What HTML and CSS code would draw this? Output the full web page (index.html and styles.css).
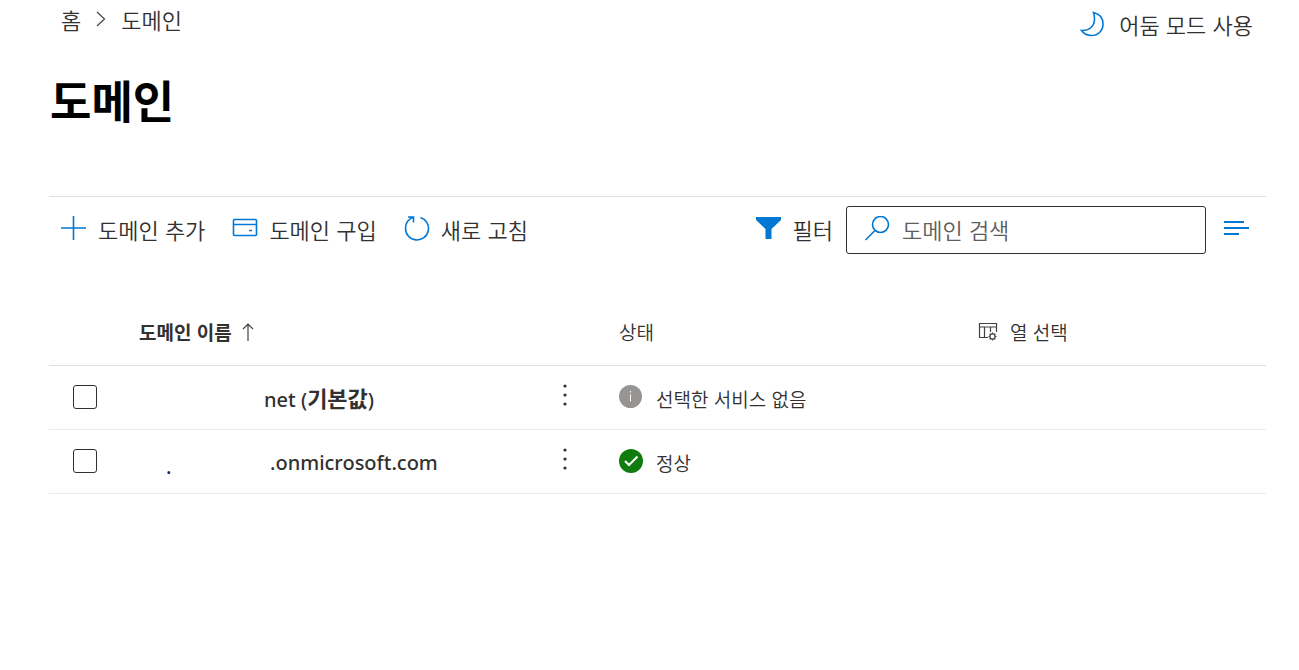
FILE: index.html
```html
<!DOCTYPE html>
<html lang="ko">
<head>
<meta charset="utf-8">
<title>도메인</title>
<meta name="viewport" content="width=device-width, initial-scale=1">
<link rel="stylesheet" href="styles.css">
</head>
<body>
<header class="topbar">
  <nav class="breadcrumb" aria-label="이동 경로">
    <a href="#">홈</a>
    <svg class="chevron" width="10" height="16" viewBox="0 0 10 16"><path d="M1 1l7.500 7L1 15"/></svg>
    <a href="#" aria-current="page">도메인</a>
  </nav>
  <button class="command dark-mode" type="button">
    <svg class="icon" width="26" height="26" viewBox="0 0 26 26"><path d="M13.500 1.500C20 3 23 7.500 23 13c0 6.500-4.800 11.500-11.500 11.500-4.500 0-8-2-10-5C9 20 14.500 15.500 14.500 8c0-2.300-.300-4.500-1-6.500z"/></svg>
    <span>어둠 모드 사용</span>
  </button>
</header>
<main class="page">
  <h1>도메인</h1>
  <div class="toolbar">
    <button class="command" type="button">
      <svg class="icon" width="26" height="26" viewBox="0 0 26 26"><path d="M12.500 0v24M0 12h25"/></svg>
      <span>도메인 추가</span>
    </button>
    <button class="command" type="button">
      <svg class="icon" width="26" height="26" viewBox="0 0 26 26"><rect x="1.500" y="3.500" width="23" height="16" rx="1"/><path d="M1.500 8.500h23M17 14.500h3"/></svg>
      <span>도메인 구입</span>
    </button>
    <button class="command" type="button">
      <svg class="icon" width="26" height="26" viewBox="0 0 26 26"><path d="M4 1h5.500v5.500M9.500 1C4.500 3 1.500 7.500 1.500 12.500A11.500 11.500 0 1 0 16.500 1.500"/></svg>
      <span>새로 고침</span>
    </button>
    <button class="command filter" type="button">
      <svg class="icon" width="26" height="26" viewBox="0 0 26 26"><path class="solid" d="M0 1h25v3l-9.500 9v10h-6V13L0 4z"/></svg>
      <span>필터</span>
    </button>
    <label class="search">
      <svg class="icon" width="26" height="26" viewBox="0 0 26 26"><circle cx="16.500" cy="8.500" r="8"/><path d="M11 14.500l-9.500 9.500"/></svg>
      <input type="search" placeholder="도메인 검색" aria-label="도메인 검색">
    </label>
    <button class="command" type="button" aria-label="보기 옵션">
      <svg class="icon lines" width="26" height="26" viewBox="0 0 26 26"><path d="M0 6h20M0 12h25M0 18h15"/></svg>
    </button>
  </div>
  <table class="domains">
    <colgroup><col class="col-check"><col class="col-name"><col class="col-menu"><col class="col-status"><col></colgroup>
    <thead>
      <tr>
        <th></th>
        <th class="sorted" aria-sort="ascending"><span class="cell">도메인 이름 <svg class="glyph" width="12" height="20" viewBox="0 0 12 20"><path d="M6 19V2M1 7l5-5 5 5"/></svg></span></th>
        <th></th>
        <th>상태</th>
        <th>
          <button class="choose" type="button">
            <svg class="glyph" width="20" height="20" viewBox="0 0 20 20"><path d="M10 15.500H1.500v-14h17V10M1.500 5h17M6.500 5v10.500M12.500 5v5"/><circle cx="14.500" cy="14.500" r="2.600"/><path d="M14.500 10.500v1.500M14.500 17v1.500M10.500 14.500H12M17 14.500h1.500M11.700 11.700l1 1M16.300 16.300l1 1M17.300 11.700l-1 1M12.700 16.300l-1 1"/></svg>
            <span>열 선택</span>
          </button>
        </th>
      </tr>
    </thead>
    <tbody>
      <tr>
        <td><input class="check" type="checkbox" aria-label="net (기본값) 선택"></td>
        <td><a class="domain" href="#"><span class="masked wide"></span><span>net (<b>기본값</b>)</span></a></td>
        <td><button class="more" type="button" aria-label="추가 작업"><svg width="6" height="22" viewBox="0 0 6 22"><circle cx="3" cy="2" r="1.600"/><circle cx="3" cy="11" r="1.600"/><circle cx="3" cy="20" r="1.600"/></svg></button></td>
        <td colspan="2"><span class="status"><svg class="badge" width="24" height="24" viewBox="0 0 24 24"><circle class="info" cx="11.500" cy="11.500" r="11.500"/><path class="mark thin" d="M11.500 9.500v7M11.500 6v1.500"/></svg><span class="state">선택한 서비스 없음</span></span></td>
      </tr>
      <tr>
        <td><input class="check" type="checkbox" aria-label=".onmicrosoft.com 선택"></td>
        <td><a class="domain" href="#"><span class="masked"><span class="remnant">.</span></span><span>.onmicrosoft.com</span></a></td>
        <td><button class="more" type="button" aria-label="추가 작업"><svg width="6" height="22" viewBox="0 0 6 22"><circle cx="3" cy="2" r="1.600"/><circle cx="3" cy="11" r="1.600"/><circle cx="3" cy="20" r="1.600"/></svg></button></td>
        <td colspan="2"><span class="status"><svg class="badge" width="24" height="24" viewBox="0 0 24 24"><circle class="ok" cx="12" cy="12" r="12"/><path class="mark" d="M6 12l4 4 8.500-8.500"/></svg><span class="state">정상</span></span></td>
      </tr>
    </tbody>
  </table>
</main>
</body>
</html>
```
FILE: styles.css
```css
* { box-sizing: border-box; }
body {
  margin: 0;
  background: #fff;
  color: #323130;
  font-family: "Noto Sans CJK KR", sans-serif;
  font-size: 22px;
  font-weight: 350;
  line-height: 32px;
}
button, input { font: inherit; color: inherit; }
button { background: none; border: 0; padding: 0; cursor: pointer; }
a { color: inherit; text-decoration: none; }
svg { display: block; flex: none; fill: none; }
.icon { stroke: #0078d4; stroke-width: 1.6; }
.lines { stroke-width: 2; }
.solid { fill: #0078d4; stroke: none; }
.glyph, .chevron { stroke: #44423f; stroke-width: 1.2; }
.topbar {
  display: flex;
  justify-content: space-between;
  align-items: flex-start;
  padding: 3px 46px 0 61px;
}
.breadcrumb { display: flex; align-items: center; height: 32px; gap: 15px; }
.command { display: flex; align-items: center; gap: 11px; padding-bottom: 2px; white-space: nowrap; }
.dark-mode { gap: 13px; padding: 5px 0 0; }
.page { padding: 0 33px 0 50px; }
h1 {
  margin: 28px 0 64px;
  color: #000;
  font-size: 45px;
  font-weight: 700;
  line-height: 64px;
}
.toolbar {
  display: flex;
  align-items: center;
  gap: 27px;
  margin-left: -1px;
  padding: 9px 16px 9px 12px;
  border-top: 1px solid #e1dfdd;
}
.filter { margin-left: auto; }
.search {
  display: flex;
  align-items: center;
  gap: 12px;
  width: 360px;
  height: 48px;
  margin: 0 -9px 0 -14px;
  padding: 0 17px 2px;
  border: 1px solid #323130;
  border-radius: 3px;
}
.search input { flex: 1; min-width: 0; border: 0; padding: 0; outline: 0; background: none; }
.search input::placeholder { color: #605e5c; opacity: 1; }
.domains {
  width: calc(100% + 1px);
  margin: 36px 0 0 -1px;
  border-collapse: collapse;
  table-layout: fixed;
  font-size: 19px;
  line-height: 28px;
}
.col-check { width: 90px; }
.col-name { width: 411px; }
.col-menu { width: 69px; }
.col-status { width: 359px; }
th, td {
  height: 64px;
  padding: 0;
  border-bottom: 1px solid #edebe9;
  text-align: left;
  font-weight: 350;
}
th { height: 66px; border-color: #e1dfdd; }
th.sorted { font-weight: 700; }
.cell, .choose { display: flex; align-items: center; gap: 10px; }
.choose { gap: 12px; }
.check {
  display: block;
  appearance: none;
  width: 24px;
  height: 24px;
  margin: 0 24px;
  border: 1px solid #323130;
  border-radius: 3px;
}
.domain {
  display: flex;
  padding-top: 3px;
  font-family: "Noto Sans", "Noto Sans CJK KR", sans-serif;
  font-size: 20px;
  font-weight: 500;
}
.domain b { font-size: 22px; }
.masked { width: 131px; height: 28px; padding-left: 27px; }
.wide { width: 125px; }
.remnant { display: block; padding-top: 4px; color: #201f5c; }
.more { display: flex; justify-content: center; width: 30px; padding-bottom: 4px; }
.more svg { fill: #323130; }
.status { display: flex; align-items: center; gap: 13px; }
.state { padding-top: 3px; }
.info { fill: #979593; }
.ok { fill: #107c10; }
.mark { stroke: #fff; stroke-width: 2; }
.thin { stroke-width: 1; }
```
